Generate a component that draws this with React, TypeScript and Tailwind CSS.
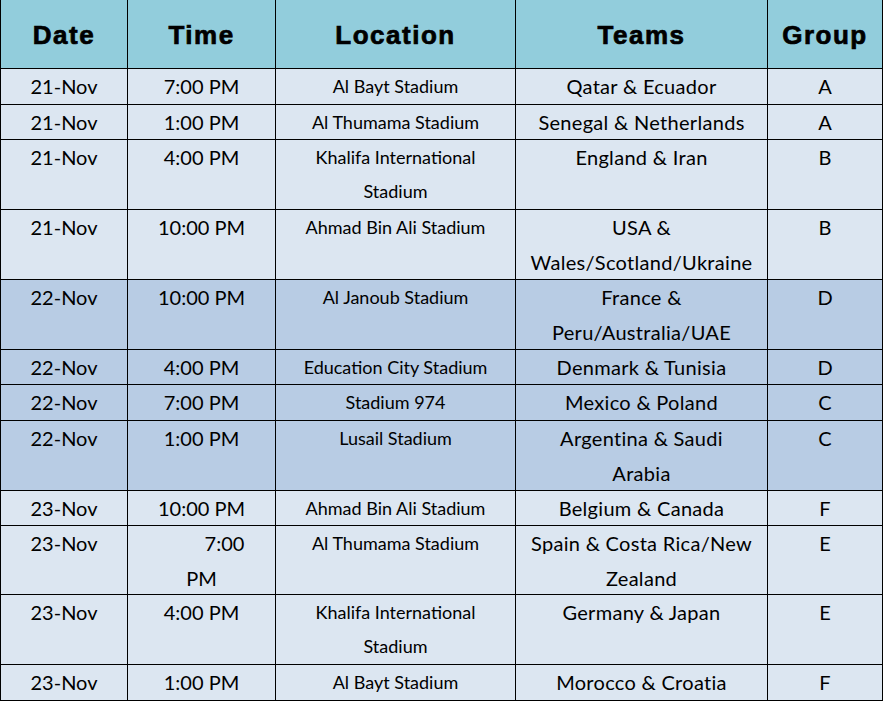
const rows = [
  { date: "21-Nov", time: ["7:00 PM"], loc: ["Al Bayt Stadium"], teams: ["Qatar & Ecuador"], group: "A", dark: false },
  { date: "21-Nov", time: ["1:00 PM"], loc: ["Al Thumama Stadium"], teams: ["Senegal & Netherlands"], group: "A", dark: false },
  { date: "21-Nov", time: ["4:00 PM"], loc: ["Khalifa International", "Stadium"], teams: ["England & Iran"], group: "B", dark: false },
  { date: "21-Nov", time: ["10:00 PM"], loc: ["Ahmad Bin Ali Stadium"], teams: ["USA &", "Wales/Scotland/Ukraine"], group: "B", dark: false },
  { date: "22-Nov", time: ["10:00 PM"], loc: ["Al Janoub Stadium"], teams: ["France &", "Peru/Australia/UAE"], group: "D", dark: true },
  { date: "22-Nov", time: ["4:00 PM"], loc: ["Education City Stadium"], teams: ["Denmark & Tunisia"], group: "D", dark: true },
  { date: "22-Nov", time: ["7:00 PM"], loc: ["Stadium 974"], teams: ["Mexico & Poland"], group: "C", dark: true },
  { date: "22-Nov", time: ["1:00 PM"], loc: ["Lusail Stadium"], teams: ["Argentina & Saudi", "Arabia"], group: "C", dark: true },
  { date: "23-Nov", time: ["10:00 PM"], loc: ["Ahmad Bin Ali Stadium"], teams: ["Belgium & Canada"], group: "F", dark: false },
  { date: "23-Nov", time: ["7:00", "PM"], loc: ["Al Thumama Stadium"], teams: ["Spain & Costa Rica/New", "Zealand"], group: "E", dark: false },
  { date: "23-Nov", time: ["4:00 PM"], loc: ["Khalifa International", "Stadium"], teams: ["Germany & Japan"], group: "E", dark: false },
  { date: "23-Nov", time: ["1:00 PM"], loc: ["Al Bayt Stadium"], teams: ["Morocco & Croatia"], group: "F", dark: false },
];

const headers = ["Date", "Time", "Location", "Teams", "Group"];

const body = "font-['Lato','Open_Sans',sans-serif] text-[20px] leading-[35px] text-black";

function Lines({ lines, indentFirst }: { lines: string[]; indentFirst?: boolean }) {
  return (
    <>
      {lines.map((l, i) => (
        <div key={i} className={`whitespace-nowrap ${indentFirst && i === 0 && lines.length > 1 ? "pl-[46px]" : ""}`}>
          {l}
        </div>
      ))}
    </>
  );
}

export default function App() {
  return (
    <div className="w-[883px] h-[701px] bg-black pl-px pb-px grid grid-cols-[126px_147px_239px_251px_114px] grid-rows-[68px_35px_34px_69px_69px_69px_34px_35px_69px_34px_68px_69px_35px] gap-px overflow-hidden">
      {headers.map((h) => (
        <div
          key={h}
          className="bg-[#92cddc] flex items-center justify-center pt-[2px] font-['Liberation_Sans',Arial,sans-serif] font-bold text-[26px] tracking-[1.5px] text-black [-webkit-text-stroke:0.7px_black]"
        >
          {h}
        </div>
      ))}
      {rows.map((r, i) => {
        const bg = r.dark ? "bg-[#b8cce4]" : "bg-[#dce6f1]";
        return (
          <div key={i} className="contents">
            <div className={`${bg} ${body} text-center`}>{r.date}</div>
            <div className={`${bg} ${body} text-center`}>
              <Lines lines={r.time} indentFirst />
            </div>
            <div className={`${bg} font-['Lato','Open_Sans',sans-serif] text-[18px] leading-[34px] text-black text-center`}>
              <Lines lines={r.loc} />
            </div>
            <div className={`${bg} ${body} tracking-[0.3px] text-center`}>
              <Lines lines={r.teams} />
            </div>
            <div className={`${bg} ${body} text-center`}>{r.group}</div>
          </div>
        );
      })}
    </div>
  );
}
